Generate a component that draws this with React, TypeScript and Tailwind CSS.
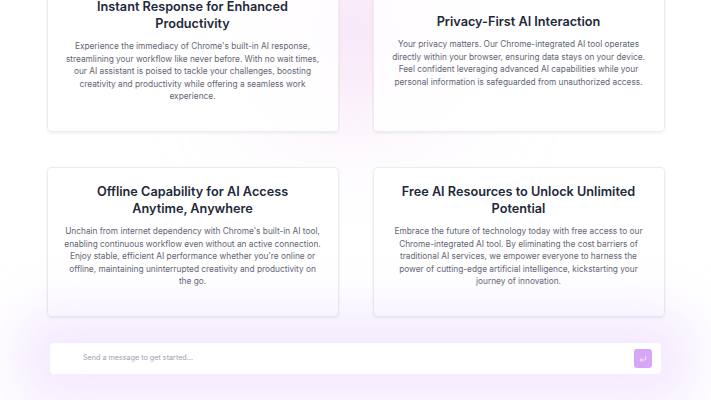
import { CornerDownLeft } from 'lucide-react'

interface Feature {
  title: string
  body: string
}

const FEATURES: Feature[] = [
  {
    title: 'Instant Response for Enhanced Productivity',
    body: "Experience the immediacy of Chrome's built-in AI response, streamlining your workflow like never before. With no wait times, our AI assistant is poised to tackle your challenges, boosting creativity and productivity while offering a seamless work experience.",
  },
  {
    title: 'Privacy-First AI Interaction',
    body: 'Your privacy matters. Our Chrome-integrated AI tool operates directly within your browser, ensuring data stays on your device. Feel confident leveraging advanced AI capabilities while your personal information is safeguarded from unauthorized access.',
  },
  {
    title: 'Offline Capability for AI Access Anytime, Anywhere',
    body: "Unchain from internet dependency with Chrome's built-in AI tool, enabling continuous workflow even without an active connection. Enjoy stable, efficient AI performance whether you're online or offline, maintaining uninterrupted creativity and productivity on the go.",
  },
  {
    title: 'Free AI Resources to Unlock Unlimited Potential',
    body: 'Embrace the future of technology today with free access to our Chrome-integrated AI tool. By eliminating the cost barriers of traditional AI services, we empower everyone to harness the power of cutting-edge artificial intelligence, kickstarting your journey of innovation.',
  },
]

export default function App() {
  return (
    <div
      className="relative h-[400px] w-[711px] overflow-hidden bg-white"
      style={{ fontFamily: 'Inter, "Noto Sans", sans-serif' }}
    >
      {/* background glows */}
      <div className="pointer-events-none absolute left-[275px] top-[-50px] h-[160px] w-[160px] rounded-full bg-[#efc9ef]/70 blur-3xl" />

      <div className="relative mt-[-18px] flex flex-col items-center">
        <div className="grid w-[618px] grid-cols-2 gap-x-[34px] gap-y-[35px]">
          {FEATURES.map(f => (
            <div
              key={f.title}
              className="flex h-[150px] flex-col justify-center rounded-[5px] border border-gray-200/80 bg-white/85 px-[15px] pb-[28px] pt-[16px] text-center shadow-[0_1px_3px_rgba(0,0,0,0.08)]"
            >
              <h3 className="mx-auto max-w-[238px] text-[12.7px] font-semibold leading-[16.5px] text-[#1e2939]">
                {f.title}
              </h3>
              <p className="mt-[8px] text-[8.3px] leading-[12.6px] text-[#5f6673]">{f.body}</p>
            </div>
          ))}
        </div>

        <div className="mt-[26px] flex h-[31px] w-[611px] items-center rounded-[4px] bg-white pl-[33px] pr-[9px] shadow-[0_0_55px_30px_rgba(216,180,254,0.3)]">
          <input
            autoFocus
            placeholder="Send a message to get started..."
            className="flex-1 bg-transparent text-[7.2px] text-gray-700 caret-gray-600 outline-none placeholder:text-gray-400"
          />
          <button className="flex h-[19px] w-[18px] items-center justify-center rounded-[3px] bg-[#d6a6f7] text-white">
            <CornerDownLeft className="h-[8px] w-[8px]" strokeWidth={2} />
          </button>
        </div>
      </div>
    </div>
  )
}
